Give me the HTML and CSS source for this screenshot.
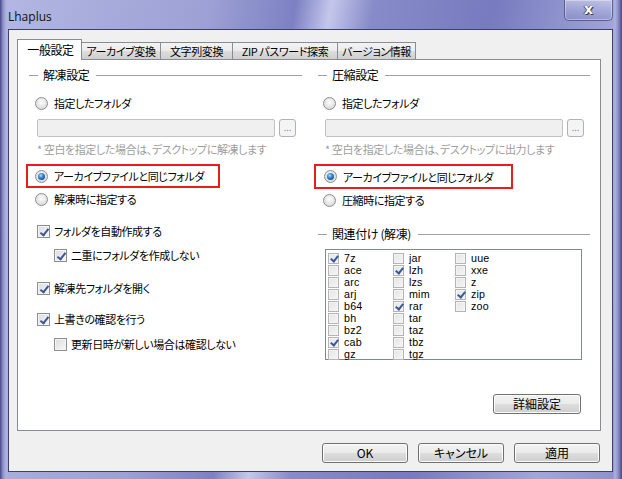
FILE: index.html
```html
<!DOCTYPE html>
<html lang="ja">
<head>
    <meta charset="UTF-8">
    <title>Lhaplus</title>
    <link rel="stylesheet" href="styles.css">
</head>
<body>
    <div class="window">
        <div class="titlebar">
            <span class="title">Lhaplus</span>
            <div class="close">x</div>
        </div>
        <div class="client">
            <ul class="tabs">
                <li class="tab active">一般設定</li>
                <li class="tab">アーカイブ変換</li>
                <li class="tab">文字列変換</li>
                <li class="tab">ZIP パスワード探索</li>
                <li class="tab">バージョン情報</li>
            </ul>
            <div class="panel">
                <!-- 解凍 -->
                <div class="col">
                    <div class="group-head"><span>解凍設定</span></div>
                    <div class="opt first"><i class="radio"></i>指定したフォルダ</div>
                    <div class="path">
                        <div class="field"></div>
                        <div class="browse">...</div>
                    </div>
                    <div class="note">* 空白を指定した場合は、デスクトップに解凍します</div>
                    <div class="mark">
                        <div class="opt"><i class="radio on"></i>アーカイブファイルと同じフォルダ</div>
                    </div>
                    <div class="opt after-mark"><i class="radio"></i>解凍時に指定する</div>

                    <div class="check c1"><i class="cb on"></i>フォルダを自動作成する</div>
                    <div class="check sub c2"><i class="cb on"></i>二重にフォルダを作成しない</div>
                    <div class="check c3"><i class="cb on"></i>解凍先フォルダを開く</div>
                    <div class="check c4"><i class="cb on"></i>上書きの確認を行う</div>
                    <div class="check sub c5"><i class="cb"></i>更新日時が新しい場合は確認しない</div>
                </div>
                <!-- 圧縮 -->
                <div class="col">
                    <div class="group-head"><span>圧縮設定</span></div>
                    <div class="opt first"><i class="radio"></i>指定したフォルダ</div>
                    <div class="path">
                        <div class="field"></div>
                        <div class="browse">...</div>
                    </div>
                    <div class="note">* 空白を指定した場合は、デスクトップに出力します</div>
                    <div class="mark wide">
                        <div class="opt"><i class="radio on"></i>アーカイブファイルと同じフォルダ</div>
                    </div>
                    <div class="opt after-mark"><i class="radio"></i>圧縮時に指定する</div>

                    <div class="group-head assoc"><span>関連付け (解凍)</span></div>
                    <ul class="exts">
                        <li><i class="cb small on"></i>7z</li>
                        <li><i class="cb small"></i>ace</li>
                        <li><i class="cb small"></i>arc</li>
                        <li><i class="cb small"></i>arj</li>
                        <li><i class="cb small"></i>b64</li>
                        <li><i class="cb small"></i>bh</li>
                        <li><i class="cb small"></i>bz2</li>
                        <li><i class="cb small on"></i>cab</li>
                        <li><i class="cb small"></i>gz</li>
                        <li><i class="cb small"></i>jar</li>
                        <li><i class="cb small on"></i>lzh</li>
                        <li><i class="cb small"></i>lzs</li>
                        <li><i class="cb small"></i>mim</li>
                        <li><i class="cb small on"></i>rar</li>
                        <li><i class="cb small"></i>tar</li>
                        <li><i class="cb small"></i>taz</li>
                        <li><i class="cb small"></i>tbz</li>
                        <li><i class="cb small"></i>tgz</li>
                        <li><i class="cb small"></i>uue</li>
                        <li><i class="cb small"></i>xxe</li>
                        <li><i class="cb small"></i>z</li>
                        <li><i class="cb small on"></i>zip</li>
                        <li><i class="cb small"></i>zoo</li>
                    </ul>
                    <div class="detail-row">
                        <button class="btn detail">詳細設定</button>
                    </div>
                </div>
            </div>
            <div class="actions">
                <button class="btn">OK</button>
                <button class="btn">キャンセル</button>
                <button class="btn">適用</button>
            </div>
        </div>
    </div>
</body>
</html>
```

FILE: styles.css
```css
body {
    margin: 0;
    background: #6e72b4;
    font-family: "Noto Sans CJK JP", sans-serif;
    font-size: 11px;
    letter-spacing: -0.4px;
    font-feature-settings: "palt" 1;
    color: #000;
}

.window {
    width: 622px;
    height: 479px;
    display: flex;
    flex-direction: column;
    background:
        linear-gradient(to right, #47498a 0, #8d91c9 3px, #aeb2de 6px, transparent 8px, transparent 613px, #aeb2de 615px, #8d91c9 618px, #47498a 622px),
        linear-gradient(100deg, #b3b7e2 0%, #9ca0d4 30%, #7d81c3 42%, #c4c7eb 47%, #878bc9 53%, #777bbf 70%, #a2a6d9 88%, #8c90cc 100%);
    box-sizing: border-box;
}

/* title bar */
.titlebar {
    height: 29px;
    position: relative;
    display: flex;
    align-items: center;
    padding-left: 8px;
}

.title {
    font-family: "Open Sans", "DejaVu Sans", sans-serif;
    font-size: 12px;
    letter-spacing: 0;
    color: #111;
    margin-top: 3px;
}

.close {
    position: absolute;
    left: 564px;
    top: 0;
    width: 47px;
    height: 20px;
    border: 1px solid #5a5e92;
    border-top: none;
    border-radius: 0 0 5px 5px;
    background: linear-gradient(to bottom, rgba(255, 255, 255, 0.35), rgba(255, 255, 255, 0.1) 50%, rgba(120, 124, 190, 0.3));
    box-shadow: inset 0 0 0 1px rgba(255, 255, 255, 0.35);
    color: #fff;
    font-family: "DejaVu Sans", sans-serif;
    font-weight: bold;
    font-size: 14px;
    letter-spacing: 0;
    line-height: 18px;
    text-align: center;
    text-shadow: 0 0 1px #333, 1px 1px 0 #444, -1px 0 0 #555;
}

/* client area */
.client {
    flex: 1;
    margin: 0 9px 7px 8px;
    background: #f0f0f0;
    border: 1px solid #3c3f70;
    padding: 9px 0 0 8px;
    display: flex;
    flex-direction: column;
}

.tabs {
    list-style: none;
    margin: 0;
    padding: 0;
    height: 20px;
    display: flex;
    align-items: flex-end;
    position: relative;
    z-index: 1;
}

.tab {
    box-sizing: border-box;
    height: 17px;
    border: 1px solid #898c95;
    border-bottom: none;
    margin-left: -1px;
    background: linear-gradient(to bottom, #f3f3f3, #ebebeb 50%, #dddddd 51%, #cfcfcf);
    text-align: center;
    line-height: 16px;
    white-space: nowrap;
}

.tab.active {
    margin-left: 0;
    height: 21px;
    margin-bottom: -1px;
    background: #fff;
    line-height: 19px;
    font-size: 12px;
    padding-left: 2px;
}

.tab:nth-child(1) { width: 65px; }
.tab:nth-child(2) { width: 80px; }
.tab:nth-child(3) { width: 73px; }
.tab:nth-child(4) { width: 106px; }
.tab:nth-child(5) { width: 79px; }

.panel {
    box-sizing: border-box;
    width: 584px;
    height: 372px;
    background: #fff;
    border: 1px solid #898c95;
    padding: 0 9px 0 8px;
    display: grid;
    grid-template-columns: 276px 276px;
    column-gap: 12px;
}

.col {
    display: flex;
    flex-direction: column;
    align-items: flex-start;
}

.group-head {
    align-self: stretch;
    height: 16px;
    margin-top: 7px;
    padding-left: 3px;
    display: flex;
    align-items: center;
    line-height: 16px;
    font-size: 12px;
}

.group-head::before {
    content: "";
    width: 9px;
    height: 1px;
    background: #a0a0a0;
    margin-right: 5px;
}

.group-head::after {
    content: "";
    flex: 1;
    height: 1px;
    background: #a0a0a0;
    margin-left: 7px;
}

.col + .col .group-head {
    padding-left: 4px;
}

.opt, .check {
    height: 16px;
    line-height: 16px;
    display: flex;
    align-items: center;
    white-space: nowrap;
}

.opt {
    padding-left: 9px;
}

.opt.first {
    margin-top: 12px;
}

.radio {
    box-sizing: border-box;
    width: 13px;
    height: 13px;
    border-radius: 50%;
    border: 1px solid #8d8d8d;
    background: radial-gradient(circle at 50% 40%, #ffffff 0, #e9e9e9 45%, #cfcfcf 100%);
    margin-right: 6px;
    position: relative;
    flex: none;
}

.radio.on::after {
    content: "";
    position: absolute;
    left: 2px;
    top: 2px;
    width: 7px;
    height: 7px;
    border-radius: 50%;
    background: radial-gradient(circle at 40% 35%, #b4e2ff 0, #3d8fd6 35%, #1a5aa0 70%, #0c3466 100%);
}

.path {
    margin-top: 8px;
    margin-left: 11px;
    display: flex;
    gap: 4px;
}

.field {
    box-sizing: border-box;
    width: 238px;
    height: 18px;
    border: 1px solid #c3c3c3;
    border-radius: 2px;
    background: #f0f0f0;
}

.browse {
    box-sizing: border-box;
    width: 17px;
    height: 18px;
    border: 1px solid #adb2b5;
    border-radius: 3px;
    background: #f4f4f4;
    color: #8d8d8d;
    font-size: 9px;
    letter-spacing: 0;
    line-height: 15px;
    text-align: center;
}

.note {
    margin-top: 4px;
    padding-left: 11px;
    height: 16px;
    line-height: 16px;
    color: #9d9d9d;
    white-space: nowrap;
}

.mark {
    box-sizing: border-box;
    margin-top: 7px;
    width: 194px;
    height: 24px;
    border: 2px solid #ec1c1c;
    display: flex;
    align-items: center;
}

.mark .opt {
    padding-left: 7px;
}

.mark.wide {
    width: 199px;
    height: 25px;
}

.mark.wide .opt {
    padding-left: 8px;
}

.opt.after-mark {
    margin-top: 3px;
}

.check {
    padding-left: 11px;
}

.check.sub {
    padding-left: 28px;
}

.c1 { margin-top: 16px; }
.c2 { margin-top: 8px; }
.c3 { margin-top: 17px; }
.c4 { margin-top: 15px; }
.c5 { margin-top: 9px; }

.cb {
    box-sizing: border-box;
    width: 13px;
    height: 13px;
    border: 1px solid #8f8f8f;
    background: linear-gradient(135deg, #dcdcdc, #f8f8f8);
    box-shadow: inset 0 0 0 1px #f4f4f4;
    margin-right: 4px;
    position: relative;
    flex: none;
}

.cb.on::after {
    content: "";
    position: absolute;
    left: 4px;
    top: 1px;
    width: 3px;
    height: 7px;
    border: solid #3a5896;
    border-width: 0 2px 2px 0;
    transform: rotate(38deg);
}

/* associations */
.group-head.assoc {
    margin-top: 18px;
}

.exts {
    box-sizing: border-box;
    list-style: none;
    margin: 7px 0 0 11px;
    width: 257px;
    height: 111px;
    border: 1px solid #828790;
    padding: 2px 0 0 2px;
    display: grid;
    grid-auto-flow: column;
    grid-template-rows: repeat(9, 12px);
    grid-template-columns: 65px 62px auto;
}

.exts li {
    display: flex;
    align-items: center;
    height: 12px;
    font-family: "Liberation Sans", "Noto Sans", sans-serif;
    font-size: 10.7px;
    letter-spacing: 0.2px;
    line-height: 12px;
}

.cb.small {
    width: 11px;
    height: 11px;
    border-color: #b4b4b4;
    background: linear-gradient(135deg, #e4e4e4, #f6f6f6);
    margin-right: 5px;
}

.cb.small.on::after {
    left: 3px;
    top: 0;
    height: 6px;
}

.detail-row {
    align-self: stretch;
    display: flex;
    justify-content: flex-end;
    padding-right: 9px;
    margin-top: 34px;
}

.btn {
    box-sizing: border-box;
    height: 20px;
    border: 1px solid #707070;
    border-radius: 3px;
    background: linear-gradient(to bottom, #f2f2f2, #ebebeb 50%, #dddddd 51%, #cfcfcf);
    box-shadow: inset 0 0 0 1px #fcfcfc;
    font-family: "Noto Sans CJK JP", sans-serif;
    font-size: 12px;
    font-feature-settings: "palt" 1;
    line-height: 16px;
    padding: 0;
    color: #000;
}

.btn.detail {
    width: 88px;
}

.actions {
    display: flex;
    justify-content: flex-end;
    gap: 10px;
    margin-top: 12px;
    width: 583px;
}

.actions .btn {
    width: 86px;
}
```
